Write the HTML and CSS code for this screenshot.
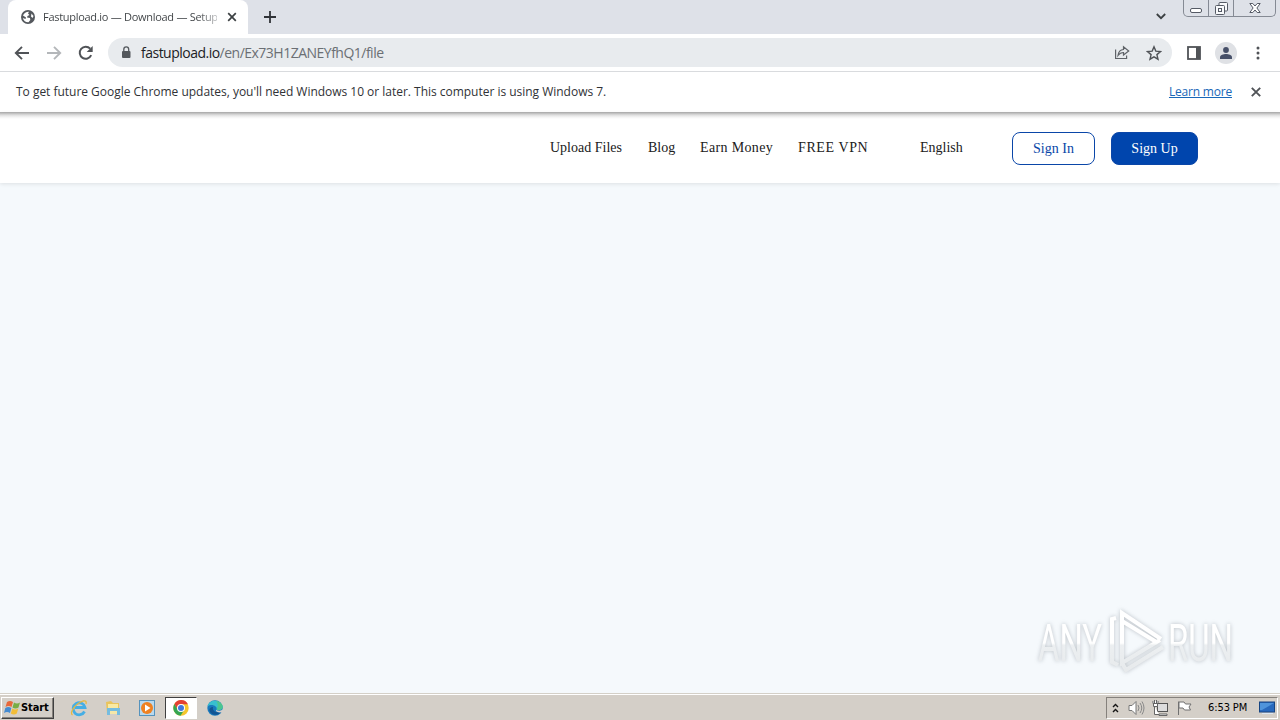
FILE: index.html
```html
<!DOCTYPE html>
<html lang="en">
<head>
    <meta charset="UTF-8">
    <meta name="viewport" content="width=device-width, initial-scale=1.0">
    <title>Fastupload.io — Download — Setup</title>
    <link rel="stylesheet" href="styles.css">
</head>
<body>
    <div class="tab-strip">
        <div class="tab">
            <svg class="favicon" width="14" height="14" viewBox="0 0 14 14">
                <circle cx="7" cy="7" r="7" fill="#54585d"/>
                <path d="M2 5.500C3 3 5.500 1.500 8 1.700L7 3.500 8.500 5 6.500 6 6 7.500 9 8 9.300 10 7.500 12.300C5 12.500 2.500 11 1.800 8L4.500 9 5 7.500z" fill="#fff"/>
                <path d="M10.500 3.500l2 2.500-1 2-1.500-1.500z" fill="#fff"/>
            </svg>
            <span class="tab-title">Fastupload.io — Download — Setup</span>
            <svg class="tab-close" width="10" height="10" viewBox="0 0 10 10"><path d="M1.200 1.200l7.600 7.600M8.800 1.200L1.200 8.800" stroke="#3c4043" stroke-width="1.700"/></svg>
        </div>
        <svg class="new-tab" width="12" height="12" viewBox="0 0 12 12"><path d="M6 0v12M0 6h12" stroke="#303338" stroke-width="1.800"/></svg>
        <svg class="tab-search" width="10" height="7" viewBox="0 0 10 7"><path d="M.8 1L5 5.200 9.200 1" fill="none" stroke="#3c4043" stroke-width="1.800"/></svg>
        <div class="window-buttons">
            <span class="minimize"><svg width="13" height="5" viewBox="0 0 13 5"><rect x=".5" y=".5" width="11" height="4" rx="1.500" fill="#fff" stroke="#555a65"/></svg></span>
            <span class="restore"><svg width="13" height="13" viewBox="0 0 13 13" fill="#f8f9fb" stroke="#555a65"><rect x="4" y=".5" width="8.500" height="8.500" rx="1"/><rect x=".5" y="3.500" width="9" height="9" rx="1"/><rect x="3.500" y="6.500" width="3" height="3"/></svg></span>
            <span class="close"><svg width="12" height="10" viewBox="0 0 12 10"><path d="M.8.500h3L6 3 8.200.500h3L7.900 5l3.300 4.500h-3L6 7 3.800 9.500h-3L4.100 5z" fill="#fff" stroke="#555a65"/></svg></span>
        </div>
    </div>

    <div class="toolbar">
        <svg class="back" width="16" height="16" viewBox="0 0 16 16"><path d="M15 8H2.500M8 1.800L1.800 8 8 14.200" fill="none" stroke="#505357" stroke-width="1.900"/></svg>
        <svg class="forward" width="16" height="16" viewBox="0 0 16 16"><path d="M1 8h12.500M8 1.800L14.200 8 8 14.200" fill="none" stroke="#b4b7ba" stroke-width="1.900"/></svg>
        <svg class="reload" width="16" height="16" viewBox="0 0 16 16"><path d="M13.200 10.200A6 6 0 1 1 12.200 3.700" fill="none" stroke="#505357" stroke-width="2"/><path d="M14.700 1v6h-6z" fill="#505357"/></svg>
        <div class="address-bar">
            <svg class="lock" width="10" height="13" viewBox="0 0 10 13"><rect x="1" y="5" width="8.500" height="7" rx="1" fill="#54585d"/><path d="M2.800 5V3.400a2.450 2.450 0 0 1 4.900 0V5" fill="none" stroke="#54585d" stroke-width="1.300"/></svg>
            <span class="url"><b>fastupload.io</b>/en/Ex73H1ZANEYfhQ1/file</span>
            <svg class="share" width="16" height="15" viewBox="0 0 16 15" fill="none" stroke="#5f6368" stroke-width="1.200"><path d="M1.600 4.500v9h11v-3M4 10.500C4.500 6.500 6.500 4.700 9.500 4.500V1.700L14.700 6 9.500 10V7.500C7 7.500 5.500 8.500 4 10.500z"/></svg>
            <svg class="star" width="16" height="16" viewBox="0 0 16 16"><path d="M8 1.800l1.800 4.300 4.700.4-3.600 3.100 1.100 4.600L8 11.800l-4 2.400 1.100-4.600L1.500 6.500l4.700-.4z" fill="none" stroke="#505357" stroke-width="1.400"/></svg>
        </div>
        <svg class="side-panel" width="14" height="14" viewBox="0 0 14 14"><rect x="1" y="1" width="12" height="12" fill="none" stroke="#505357" stroke-width="1.800"/><path d="M9 1h4v12H9z" fill="#505357"/></svg>
        <span class="profile"><svg width="12" height="12" viewBox="0 0 12 12" fill="#475069"><circle cx="6" cy="3" r="2.900"/><path d="M0 12V10.200C0 7.900 3.500 7 6 7s6 .9 6 3.200V12z"/></svg></span>
        <svg class="menu" width="4" height="14" viewBox="0 0 4 14" fill="#505357"><circle cx="2" cy="2" r="1.500"/><circle cx="2" cy="7" r="1.500"/><circle cx="2" cy="12" r="1.500"/></svg>
    </div>

    <div class="infobar">
        <span class="infobar-text">To get future Google Chrome updates, you'll need Windows 10 or later. This computer is using Windows 7.</span>
        <a class="learn-more" href="#">Learn more</a>
        <svg width="10" height="10" viewBox="0 0 10 10"><path d="M.8.800l8.400 8.400M9.200.800L.8 9.200" stroke="#505357" stroke-width="1.900"/></svg>
    </div>

    <header class="site-header">
        <nav>
            <a class="upload" href="#">Upload Files</a>
            <a class="blog" href="#">Blog</a>
            <a class="earn" href="#">Earn Money</a>
            <a class="vpn" href="#">FREE VPN</a>
            <a class="language" href="#">English</a>
        </nav>
        <a class="btn btn-outline" href="#">Sign In</a>
        <a class="btn btn-primary" href="#">Sign Up</a>
    </header>

    <main>
        <svg class="watermark" width="208" height="70" viewBox="0 0 208 70">
            <defs>
                <linearGradient id="fade" x1="0" y1="0" x2="0" y2="70" gradientUnits="userSpaceOnUse">
                    <stop offset="0" stop-color="#fff"/>
                    <stop offset=".53" stop-color="#fff"/>
                    <stop offset=".56" stop-color="#eceff1"/>
                    <stop offset="1" stop-color="#e6e9eb"/>
                </linearGradient>
            </defs>
            <text x="6" y="55" textLength="64" lengthAdjust="spacingAndGlyphs">ANY</text>
            <text x="136" y="55" textLength="65" lengthAdjust="spacingAndGlyphs">RUN</text>
            <g fill="none" stroke-width="4">
                <path d="M84 12l-4 1v43l6 3"/>
                <path d="M129 33L90 7v50l38-23M90 15l36 22"/>
                <path d="M90 57l4 7 37-23"/>
            </g>
        </svg>
    </main>

    <footer class="taskbar">
        <div class="start">
            <svg width="17" height="16" viewBox="0 0 17 16">
                <path d="M3 2q3-2 6 0L7.500 7q-3-2-6 0z" fill="#e8683a"/>
                <path d="M10 2.500q3 2 6 0L14.500 7.500q-3 2-6 0z" fill="#78ad45"/>
                <path d="M1.300 8q3-2 6 0L6 13q-3-2-6 0z" fill="#458bd1"/>
                <path d="M8.300 8.500q3 2 6 0L12.800 13.500q-3 2-6 0z" fill="#f2bd38"/>
            </svg>
            <span>Start</span>
        </div>
        <div class="pinned">
            <svg width="18" height="18" viewBox="0 0 18 18">
                <path d="M14.500 12.500A6 6 0 1 1 15 8.500H5" fill="none" stroke="#46aee4" stroke-width="2.800"/>
                <path d="M2.500 16C-1 14 5 5 13 2q4-1 3 3" fill="none" stroke="#e8b83e" stroke-width="1.300"/>
            </svg>
            <svg width="18" height="18" viewBox="0 0 18 18">
                <path d="M2 3l5-1 2 2h6v11H3z" fill="#e9c45c"/>
                <path d="M4 5h10v5H4z" fill="#f9e9a2"/>
                <path d="M3 9h13v7h-3v-4H6v4H3z" fill="#75bce0"/>
                <path d="M6 12h7v3H6z" fill="#f5e7a8"/>
            </svg>
            <svg width="18" height="18" viewBox="0 0 18 18">
                <rect x="1.500" y="1.500" width="15" height="15" fill="#b9d9ee" stroke="#5593bd"/>
                <circle cx="9" cy="9" r="6" fill="#ef8121"/>
                <path d="M7 5.500L12.500 9 7 12.500z" fill="#fff"/>
            </svg>
            <span class="active-task">
                <svg width="18" height="18" viewBox="0 0 18 18">
                    <circle cx="9" cy="9" r="7.700" fill="#f5c62d"/>
                    <path d="M2.400 5A7.700 7.700 0 0 1 16 5.300H9L5.700 10.800z" fill="#e34133"/>
                    <path d="M2.400 5A7.700 7.700 0 0 0 8.500 16.700L12.200 11 5.700 10.800z" fill="#35a552"/>
                    <circle cx="9" cy="9" r="4" fill="#fff"/>
                    <circle cx="9" cy="9" r="3" fill="#4078dc"/>
                </svg>
            </span>
            <svg width="18" height="18" viewBox="0 0 18 18">
                <circle cx="9" cy="9" r="7.700" fill="#1879bd"/>
                <path d="M1.500 7.500C3 0 14 0 16.500 7c1 4-4 5-6 3.500C12 7 5 4 1.500 7.500z" fill="#38bfcf"/>
                <path d="M10 2c4 .5 7 3 6.800 6.500-.8 2.500-4 3-6.300 2C12 8 12.500 5 10 2z" fill="#4cc590"/>
                <path d="M7 8c-1 4 3 6 8 5-3 4-9 3.500-11 0C2.500 10.500 4 8 7 8z" fill="#125493"/>
                <path d="M10 11c2 1 5 1 7-.8v2.500c-3 1.300-6 .6-7-.7z" fill="#d5cfca"/>
            </svg>
        </div>
        <div class="tray">
            <svg class="expand" width="7" height="10" viewBox="0 0 7 10"><path d="M1 4l2.500-2.500L6 4M1 9l2.500-2.500L6 9" fill="none" stroke="#151515" stroke-width="1.400"/></svg>
            <svg class="volume" width="17" height="16" viewBox="0 0 17 16"><path d="M1 5.500h3L8 1.500v13L4 10.500H1z" fill="#fff" stroke="#777"/><path d="M10 5q2 3 0 6M12 3q3.500 5 0 10M14 1.500q4 6.500 0 13" fill="none" stroke="#888"/></svg>
            <svg class="network" width="17" height="16" viewBox="0 0 17 16"><rect x="5.500" y="3.500" width="10" height="8" fill="#ddd" stroke="#555"/><path d="M7 14h8v1.500H7zM2.500 6v8.500H7M1 1v2.500h5V1M2.500 0v3M4.500 0v3M1.500 3.500h4v3h-4z" fill="#fff" stroke="#666"/></svg>
            <svg class="flag" width="17" height="16" viewBox="0 0 17 16"><path d="M2.500 15V1.500M3 2h5l1.500 2H15l-2 3 1.500 3h-6L7 8H3z" fill="#fff" stroke="#707070"/></svg>
            <span class="clock">6:53 PM</span>
            <svg class="desktop" width="16" height="14" viewBox="0 0 16 14"><rect x=".5" y="1" width="15" height="10" fill="#2869bd" stroke="#164582"/><path d="M1 2h14L3 9H1z" fill="#4f94db"/><path d="M3 12.500h11" stroke="#dbe6f2"/></svg>
        </div>
    </footer>
</body>
</html>
```
FILE: styles.css
```css
* {
    box-sizing: border-box;
}

body {
    display: flex;
    flex-direction: column;
    width: 1280px;
    height: 720px;
    margin: 0;
    overflow: hidden;
    background: #f5f9fc;
    color: #303236;
    font-family: "Open Sans", "Noto Sans", sans-serif;
}

svg {
    display: block;
    flex-shrink: 0;
}

a {
    color: inherit;
    text-decoration: none;
}

.tab-strip {
    display: flex;
    height: 34px;
    flex-shrink: 0;
    padding-left: 8px;
    background: #dee1e8;
}

.tab {
    display: flex;
    align-items: center;
    width: 240px;
    height: 34px;
    padding-left: 13px;
    border-radius: 8px 8px 0 0;
    background: #fff;
}

.tab-title {
    width: 174px;
    margin: -2px 0 0 8px;
    white-space: nowrap;
    font-size: 11px;
    letter-spacing: -0.29px;
    background: linear-gradient(90deg, #3c4043 155px, #c0c2c4 174px);
    background-clip: text;
    color: transparent;
}

.tab-close {
    margin-left: 10px;
}

.new-tab {
    margin: 11px 0 0 16px;
}

.tab-search {
    margin: 13px 17px 0 auto;
}

.window-buttons {
    display: flex;
    width: 93px;
    height: 17px;
    margin-right: 4px;
    border: 1px solid #858a94;
    border-top: 0;
    border-radius: 0 0 5px 5px;
}

.window-buttons span {
    display: flex;
    align-items: center;
    justify-content: center;
    width: 25px;
    border-right: 1px solid #858a94;
}

.window-buttons .minimize {
    padding-top: 5px;
}

.window-buttons .close {
    width: 41px;
    border-right: 0;
}

.toolbar {
    display: flex;
    align-items: center;
    height: 38px;
    flex-shrink: 0;
    padding-left: 14px;
    border-bottom: 1px solid #d9dbde;
    background: #fff;
}

.forward,
.reload {
    margin-left: 16px;
}

.address-bar {
    display: flex;
    align-items: center;
    width: 1064px;
    height: 29px;
    margin-left: 14px;
    padding-left: 13px;
    border-radius: 15px;
    background: #e8ebee;
}

.url {
    margin-left: 10px;
    color: #6b6f74;
    font-size: 14px;
    letter-spacing: -0.51px;
}

.url b {
    color: #202124;
    font-weight: 400;
}

.share {
    margin-left: auto;
}

.star {
    margin: 0 10px 0 16px;
}

.side-panel {
    margin-left: 15px;
}

.profile {
    display: flex;
    align-items: center;
    justify-content: center;
    width: 22px;
    height: 22px;
    margin-left: 14px;
    border-radius: 50%;
    background: #dfe1e5;
}

.menu {
    margin-left: 19px;
}

.infobar {
    display: flex;
    align-items: center;
    height: 41px;
    flex-shrink: 0;
    padding: 0 19px 0 16px;
    border-bottom: 1px solid #b4b4b4;
    background: #fff;
    font-size: 12px;
}

.infobar-text {
    margin-top: -2px;
    letter-spacing: -0.02px;
}

.learn-more {
    margin: -2px 19px 0 auto;
    color: #1967b8;
    letter-spacing: -0.2px;
    text-decoration: underline;
}

.site-header {
    display: flex;
    height: 70px;
    flex-shrink: 0;
    padding: 19px 82px 0 550px;
    background: linear-gradient(#b8b8b8, #dedede 2px, #f3f3f3 4px, #fff 6px);
    box-shadow: 0 1px 4px rgba(0, 0, 0, 0.1);
    color: #202020;
    font-family: "Liberation Serif", serif;
    font-size: 14px;
}

nav {
    display: flex;
    width: 462px;
    line-height: 31px;
}

nav a {
    white-space: nowrap;
}

.upload {
    width: 98px;
}

.blog {
    width: 52px;
}

.earn {
    width: 98px;
    letter-spacing: 0.35px;
}

.vpn {
    width: 122px;
    letter-spacing: 0.6px;
}

.btn {
    width: 83px;
    height: 33px;
    border: 1px solid #0a46a8;
    border-radius: 8px;
    color: #0a46a8;
    line-height: 31px;
    text-align: center;
}

.btn-primary {
    width: 87px;
    margin-left: 16px;
    background: #0045ad;
    color: #fff;
}

main {
    display: flex;
    flex: 1;
    align-items: flex-end;
    justify-content: flex-end;
    padding: 0 40px 17px 0;
}

.watermark {
    overflow: visible;
    filter: drop-shadow(0 0 2px rgba(80, 90, 100, 0.35));
}

.watermark text {
    fill: url(#fade);
    font-family: Roboto, sans-serif;
    font-size: 51px;
}

.watermark path {
    stroke: url(#fade);
}

.taskbar {
    display: flex;
    align-items: center;
    height: 27px;
    flex-shrink: 0;
    padding: 1px 2px 0 1px;
    border-top: 1px solid #d4d0c8;
    background: #d4cfc8;
    box-shadow: inset 0 1px #fff;
}

.start {
    display: flex;
    align-items: center;
    width: 53px;
    height: 22px;
    padding-left: 2px;
    border: 1px solid;
    border-color: #fff #404040 #404040 #fff;
    box-shadow: inset -1px -1px #85817c;
    color: #000;
    font-family: "DejaVu Sans Condensed", sans-serif;
    font-size: 11px;
    font-weight: 700;
    letter-spacing: -0.1px;
}

.pinned {
    display: flex;
    align-items: center;
    margin-left: 16px;
}

.pinned > svg + svg {
    margin-left: 16px;
}

.active-task {
    display: flex;
    align-items: center;
    justify-content: center;
    width: 32px;
    height: 22px;
    margin: 0 9px;
    border: 1px solid;
    border-color: #404040 #fff #fff #404040;
    background: #fff;
}

.tray {
    display: flex;
    align-items: center;
    width: 172px;
    height: 22px;
    margin-left: auto;
    padding-left: 5px;
    border: 1px solid;
    border-color: #85817c #fff #fff #85817c;
    color: #000;
}

.volume {
    margin-left: 9px;
}

.network {
    margin-left: 7px;
}

.flag {
    margin-left: 7px;
}

.clock {
    width: 41px;
    margin-left: 15px;
    font-family: "DejaVu Sans Condensed", sans-serif;
    font-size: 11px;
    letter-spacing: -0.1px;
    white-space: nowrap;
}

.desktop {
    margin-left: 10px;
}
```
